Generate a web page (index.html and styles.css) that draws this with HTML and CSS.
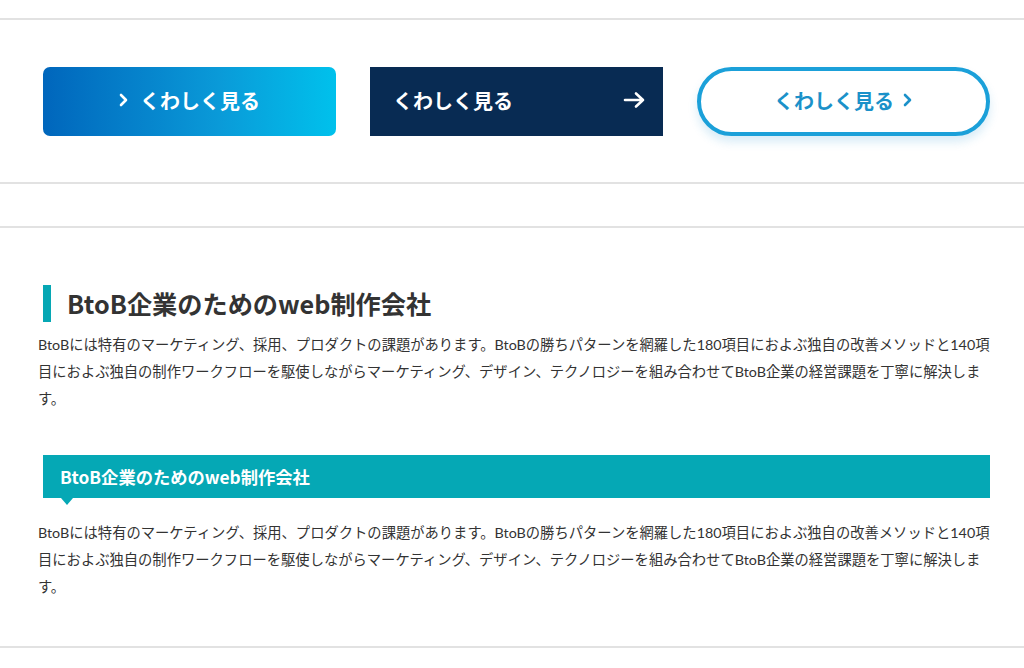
FILE: index.html
```html
<!DOCTYPE html>
<html lang="ja">
<head>
<meta charset="utf-8">
<title>Buttons and headings</title>
<link rel="stylesheet" href="styles.css">
</head>
<body>
<div class="page">
  <section class="buttons">
    <a class="btn btn-grad" href="#">
      <svg class="chev" viewBox="0 0 10 14" width="10" height="14"><polyline points="2,2 7,7 2,12" fill="none" stroke="currentColor" stroke-width="2.6" stroke-linecap="round" stroke-linejoin="round"/></svg>
      <span>くわしく見る</span>
    </a>
    <a class="btn btn-navy" href="#">
      <span>くわしく見る</span>
      <svg class="arrow" viewBox="0 0 24 18" width="24" height="18"><path d="M2 9H20M13 2.5L20 9L13 15.5" fill="none" stroke="currentColor" stroke-width="2.6" stroke-linecap="round" stroke-linejoin="round"/></svg>
    </a>
    <a class="btn btn-pill" href="#">
      <span>くわしく見る</span>
      <svg class="chev" viewBox="0 0 10 14" width="10" height="14"><polyline points="2,2 7,7 2,12" fill="none" stroke="currentColor" stroke-width="2.6" stroke-linecap="round" stroke-linejoin="round"/></svg>
    </a>
  </section>

  <section class="content">
    <h2 class="h-bar">BtoB企業のためのweb制作会社</h2>
    <p class="text">BtoBには特有のマーケティング、採用、プロダクトの課題があります。BtoBの勝ちパターンを網羅した180項目におよぶ独自の改善メソッドと140項目におよぶ独自の制作ワークフローを駆使しながらマーケティング、デザイン、テクノロジーを組み合わせてBtoB企業の経営課題を丁寧に解決します。</p>
    <h3 class="h-band">BtoB企業のためのweb制作会社</h3>
    <p class="text">BtoBには特有のマーケティング、採用、プロダクトの課題があります。BtoBの勝ちパターンを網羅した180項目におよぶ独自の改善メソッドと140項目におよぶ独自の制作ワークフローを駆使しながらマーケティング、デザイン、テクノロジーを組み合わせてBtoB企業の経営課題を丁寧に解決します。</p>
  </section>
</div>
</body>
</html>
```

FILE: styles.css
```css
* { box-sizing: border-box; }
html, body { margin: 0; padding: 0; background: #fff; }
body {
  font-family: Lato, "Noto Sans CJK JP", sans-serif;
  color: #333;
}
.page { padding-top: 18px; }

.buttons {
  border-top: 2px solid #e2e2e2;
  border-bottom: 2px solid #e2e2e2;
  padding: 47px 34px 46px 43px;
  display: grid;
  grid-template-columns: repeat(3, minmax(0, 1fr));
  gap: 34px;
}
.btn {
  height: 69px;
  display: flex;
  align-items: center;
  text-decoration: none;
  font-family: "Noto Sans CJK JP", sans-serif;
  font-weight: 700;
  font-size: 20px;
  padding-bottom: 3px;
}
.btn-grad {
  justify-content: center;
  gap: 11px;
  color: #fff;
  border-radius: 7px;
  background: linear-gradient(90deg, #0066bc 0%, #0a9ad8 60%, #00c1ec 100%);
}
.btn-navy {
  justify-content: space-between;
  padding: 0 16px 3px 23px;
  color: #fff;
  background: #082b53;
}
.btn-pill {
  justify-content: center;
  gap: 9px;
  color: #1b91c9;
  border: 4px solid #1ba0d9;
  border-radius: 40px;
  background: #fff;
  box-shadow: 0 6px 10px rgba(40, 150, 210, 0.18);
}
.chev { display: block; }
.arrow { display: block; }

.content {
  margin-top: 42px;
  border-top: 2px solid #e2e2e2;
  border-bottom: 2px solid #e2e2e2;
  padding: 57px 34px 46px 38px;
}
.h-bar {
  margin: 0 0 9px 5px;
  border-left: 8px solid #06a7b4;
  padding-left: 16px;
  font-family: "Noto Sans CJK JP", sans-serif;
  font-size: 25.2px;
  font-weight: 700;
  line-height: 37px;
  color: #333;
}
.text {
  margin: 0;
  font-size: 14.3px;
  line-height: 27px;
  color: #333;
}
.h-band {
  position: relative;
  margin: 43px 0 21px 5px;
  background: #05a8b5;
  color: #fff;
  height: 43px;
  padding: 0 17px;
  display: flex;
  align-items: center;
  font-family: "Noto Sans CJK JP", sans-serif;
  font-size: 17.3px;
  font-weight: 700;
}
.h-band::after {
  content: "";
  position: absolute;
  left: 18px;
  bottom: -7px;
  border-left: 6px solid transparent;
  border-right: 6px solid transparent;
  border-top: 7px solid #05a8b5;
}
```
